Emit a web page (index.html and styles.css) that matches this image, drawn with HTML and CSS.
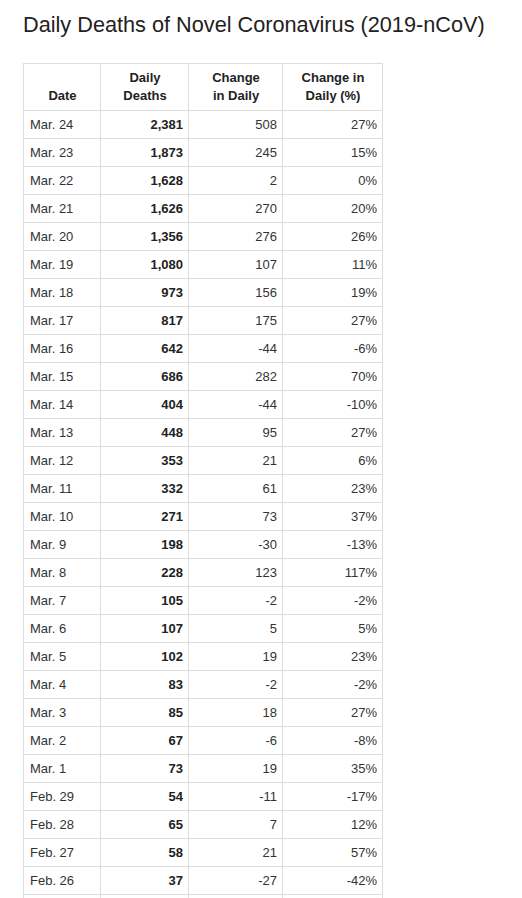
FILE: index.html
```html
<!DOCTYPE html>
<html>
<head>
<meta charset="utf-8">
<link rel="stylesheet" href="styles.css">
</head>
<body>
<div class="page">
<h1 class="title">Daily Deaths of Novel Coronavirus (2019-nCoV)</h1>
<table class="data">
<thead>
<tr><th class="c-date">Date</th><th class="c-deaths">Daily<br>Deaths</th><th class="c-chg">Change<br>in Daily</th><th class="c-pct">Change in<br>Daily (%)</th></tr>
</thead>
<tbody>
<tr><td>Mar. 24</td><td class="b">2,381</td><td>508</td><td>27%</td></tr>
<tr><td>Mar. 23</td><td class="b">1,873</td><td>245</td><td>15%</td></tr>
<tr><td>Mar. 22</td><td class="b">1,628</td><td>2</td><td>0%</td></tr>
<tr><td>Mar. 21</td><td class="b">1,626</td><td>270</td><td>20%</td></tr>
<tr><td>Mar. 20</td><td class="b">1,356</td><td>276</td><td>26%</td></tr>
<tr><td>Mar. 19</td><td class="b">1,080</td><td>107</td><td>11%</td></tr>
<tr><td>Mar. 18</td><td class="b">973</td><td>156</td><td>19%</td></tr>
<tr><td>Mar. 17</td><td class="b">817</td><td>175</td><td>27%</td></tr>
<tr><td>Mar. 16</td><td class="b">642</td><td>-44</td><td>-6%</td></tr>
<tr><td>Mar. 15</td><td class="b">686</td><td>282</td><td>70%</td></tr>
<tr><td>Mar. 14</td><td class="b">404</td><td>-44</td><td>-10%</td></tr>
<tr><td>Mar. 13</td><td class="b">448</td><td>95</td><td>27%</td></tr>
<tr><td>Mar. 12</td><td class="b">353</td><td>21</td><td>6%</td></tr>
<tr><td>Mar. 11</td><td class="b">332</td><td>61</td><td>23%</td></tr>
<tr><td>Mar. 10</td><td class="b">271</td><td>73</td><td>37%</td></tr>
<tr><td>Mar. 9</td><td class="b">198</td><td>-30</td><td>-13%</td></tr>
<tr><td>Mar. 8</td><td class="b">228</td><td>123</td><td>117%</td></tr>
<tr><td>Mar. 7</td><td class="b">105</td><td>-2</td><td>-2%</td></tr>
<tr><td>Mar. 6</td><td class="b">107</td><td>5</td><td>5%</td></tr>
<tr><td>Mar. 5</td><td class="b">102</td><td>19</td><td>23%</td></tr>
<tr><td>Mar. 4</td><td class="b">83</td><td>-2</td><td>-2%</td></tr>
<tr><td>Mar. 3</td><td class="b">85</td><td>18</td><td>27%</td></tr>
<tr><td>Mar. 2</td><td class="b">67</td><td>-6</td><td>-8%</td></tr>
<tr><td>Mar. 1</td><td class="b">73</td><td>19</td><td>35%</td></tr>
<tr><td>Feb. 29</td><td class="b">54</td><td>-11</td><td>-17%</td></tr>
<tr><td>Feb. 28</td><td class="b">65</td><td>7</td><td>12%</td></tr>
<tr><td>Feb. 27</td><td class="b">58</td><td>21</td><td>57%</td></tr>
<tr><td>Feb. 26</td><td class="b">37</td><td>-27</td><td>-42%</td></tr>
<tr class="next"><td></td><td></td><td></td><td></td></tr>
</tbody>
</table>
</div>
</body>
</html>
```
FILE: styles.css
```css
html, body {
  margin: 0;
  padding: 0;
  background: #fff;
}
body {
  font-family: "Liberation Sans", Arial, sans-serif;
  color: #333;
}
.page {
  padding: 0 23px;
}
.title {
  margin: 0;
  padding-top: 11px;
  font-size: 21.7px;
  font-weight: normal;
  line-height: 28px;
  color: #222;
}
.data {
  margin-top: 24px;
  border-collapse: collapse;
  font-size: 13px;
  line-height: 17px;
}
.data th, .data td {
  border: 1px solid #ddd;
  padding: 5px 5px 5px 6px;
}
.data th {
  font-weight: bold;
  text-align: center;
  vertical-align: bottom;
  color: #222;
  line-height: 18px;
}
.data td {
  text-align: right;
}
.data td:first-child {
  text-align: left;
}
.data td.b {
  font-weight: bold;
  color: #222;
}
.data tr.next td {
  height: 17px;
}
.c-date { width: 65px; }
.c-deaths { width: 76px; }
.c-chg { width: 82px; }
.c-pct { width: 88px; }
```
